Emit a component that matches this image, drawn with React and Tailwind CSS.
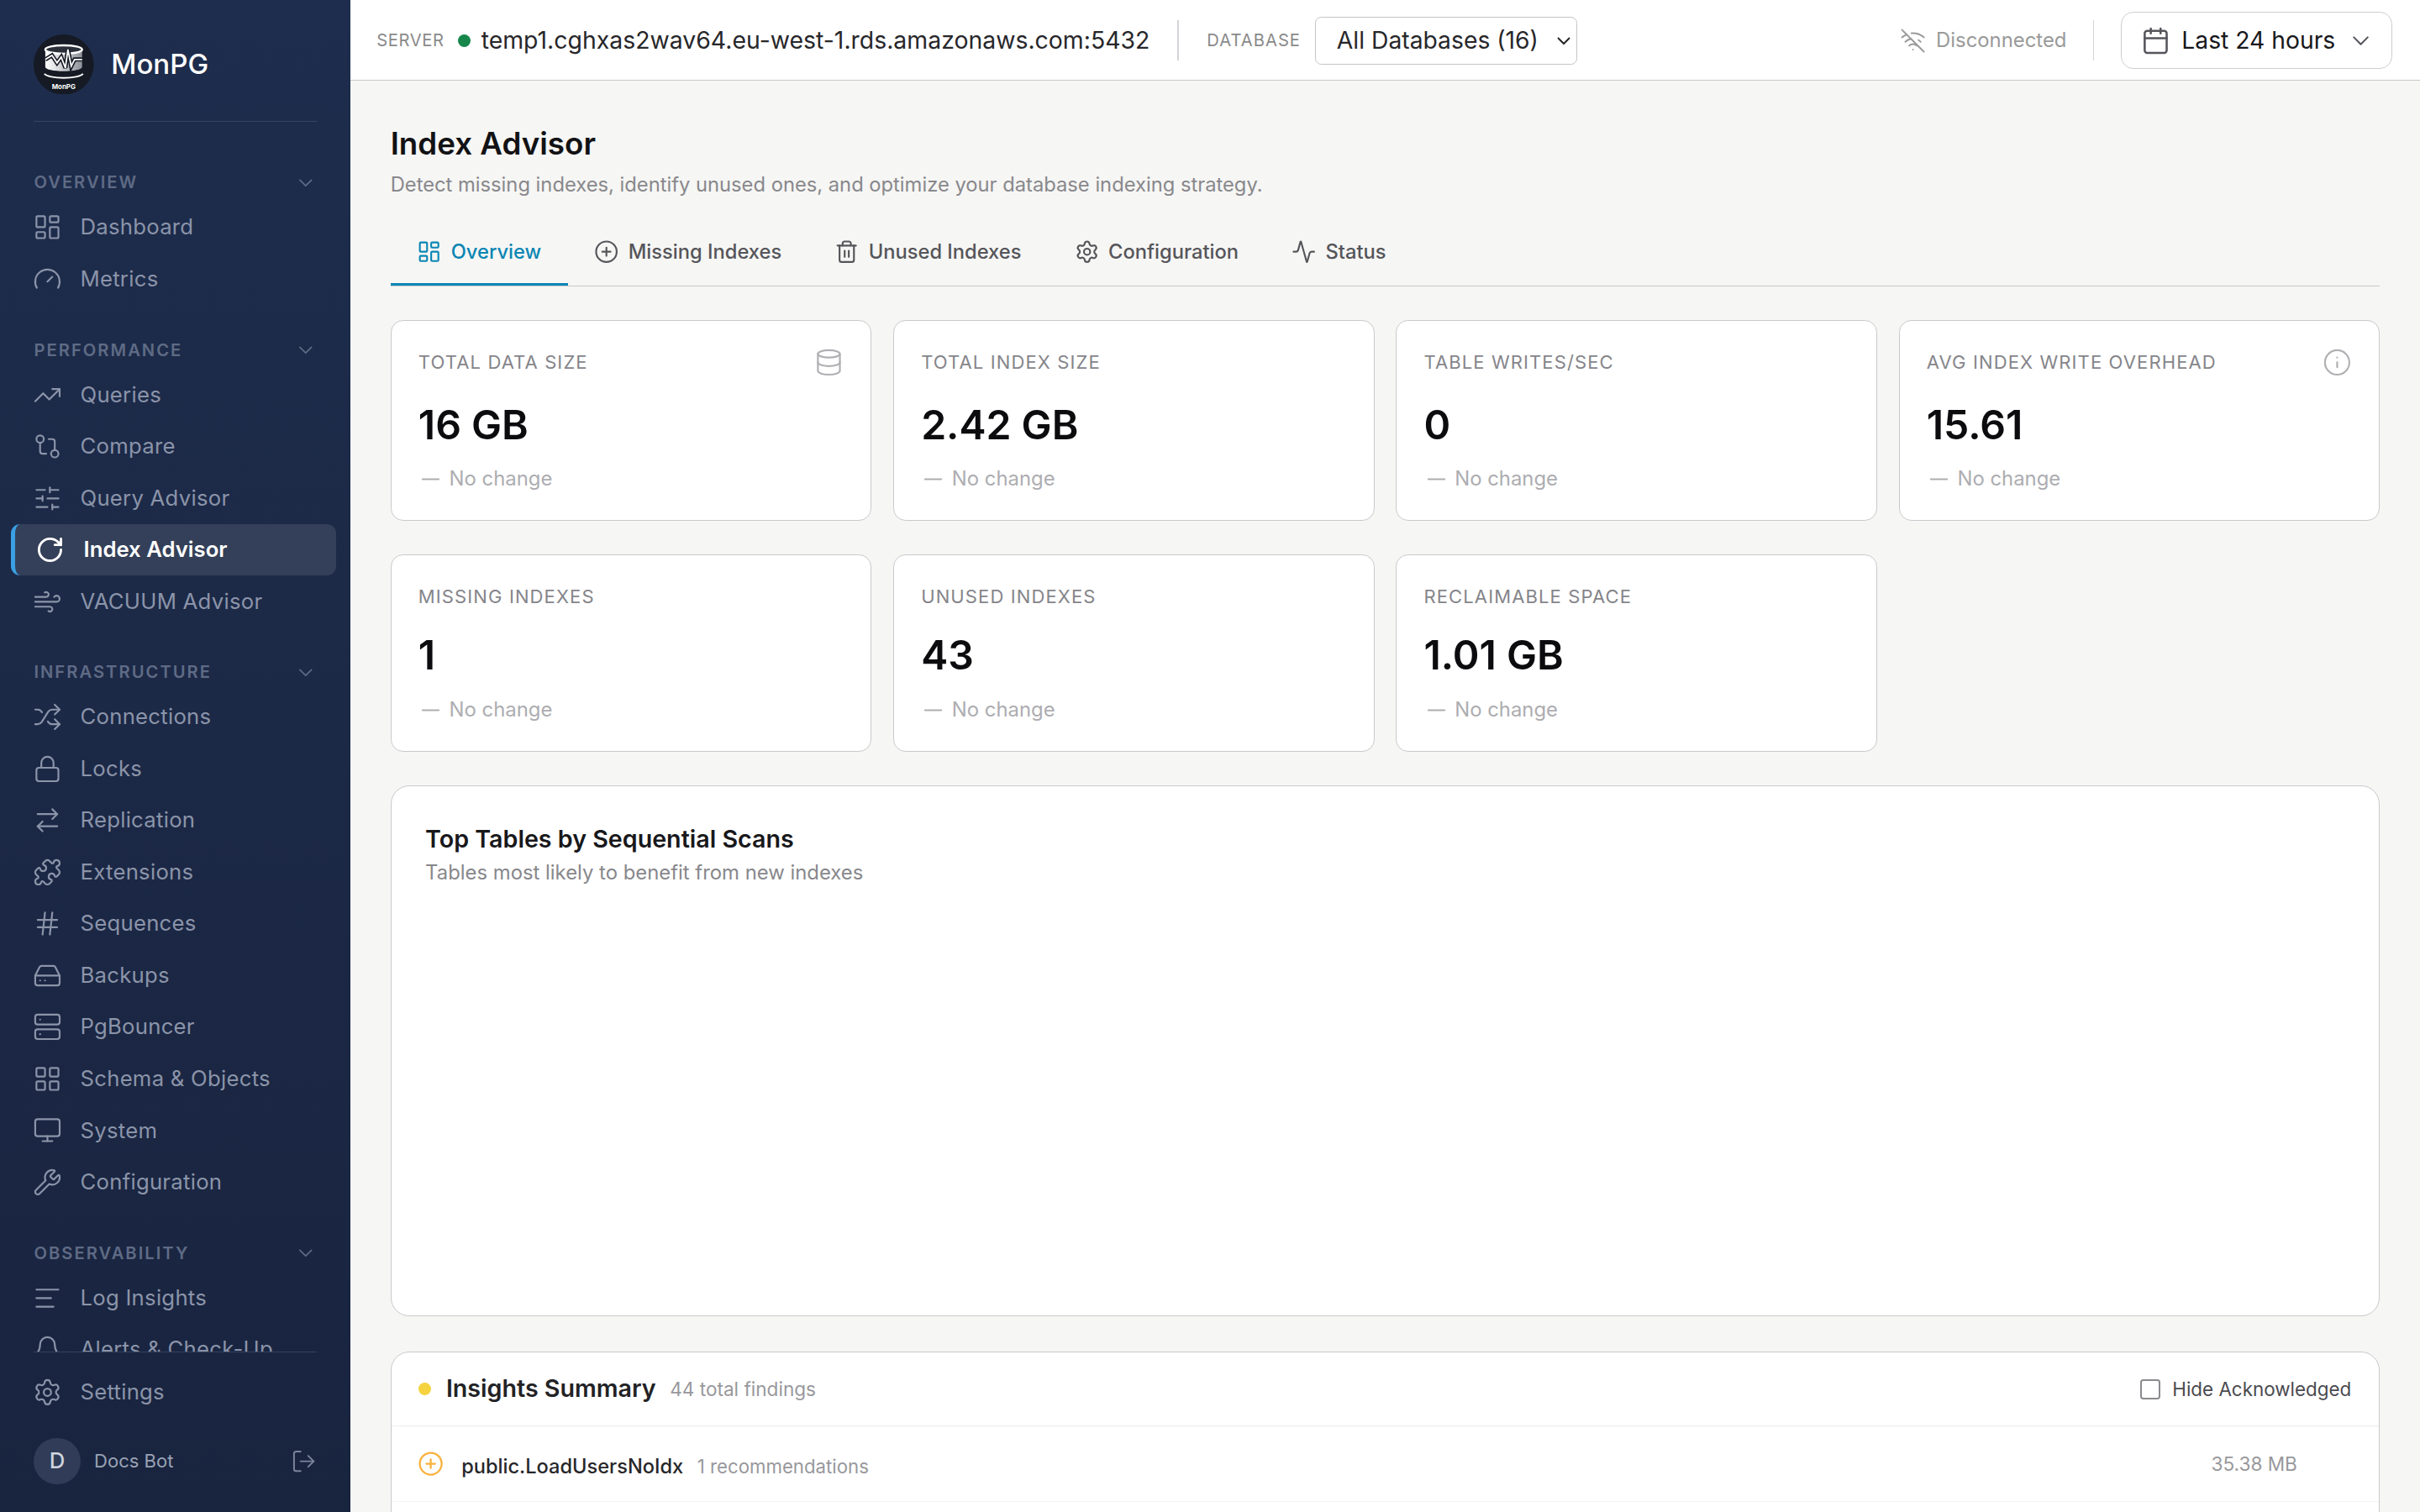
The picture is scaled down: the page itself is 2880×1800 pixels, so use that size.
import {
  Activity,
  AlignLeft,
  ArrowRightLeft,
  Bell,
  Calendar,
  ChevronDown,
  CirclePlus,
  Database,
  Gauge,
  GitCompare,
  Hash,
  HardDrive,
  Info,
  LayoutDashboard,
  LayoutGrid,
  Lock,
  LogOut,
  Minus,
  Monitor,
  Puzzle,
  RotateCw,
  Server,
  Settings,
  Shuffle,
  SlidersHorizontal,
  Trash2,
  TrendingUp,
  WifiOff,
  Wind,
  Wrench,
} from "lucide-react";

const navSections = [
  {
    title: "OVERVIEW",
    items: [
      { label: "Dashboard", icon: LayoutDashboard },
      { label: "Metrics", icon: Gauge },
    ],
  },
  {
    title: "PERFORMANCE",
    items: [
      { label: "Queries", icon: TrendingUp },
      { label: "Compare", icon: GitCompare },
      { label: "Query Advisor", icon: SlidersHorizontal },
      { label: "Index Advisor", icon: RotateCw, active: true },
      { label: "VACUUM Advisor", icon: Wind },
    ],
  },
  {
    title: "INFRASTRUCTURE",
    items: [
      { label: "Connections", icon: Shuffle },
      { label: "Locks", icon: Lock },
      { label: "Replication", icon: ArrowRightLeft },
      { label: "Extensions", icon: Puzzle },
      { label: "Sequences", icon: Hash },
      { label: "Backups", icon: HardDrive },
      { label: "PgBouncer", icon: Server },
      { label: "Schema & Objects", icon: LayoutGrid },
      { label: "System", icon: Monitor },
      { label: "Configuration", icon: Wrench },
    ],
  },
  {
    title: "OBSERVABILITY",
    items: [
      { label: "Log Insights", icon: AlignLeft },
      { label: "Alerts & Check-Up", icon: Bell },
    ],
  },
];

const tabs = [
  { label: "Overview", icon: LayoutDashboard, active: true },
  { label: "Missing Indexes", icon: CirclePlus },
  { label: "Unused Indexes", icon: Trash2 },
  { label: "Configuration", icon: Settings },
  { label: "Status", icon: Activity },
];

const stats = [
  { label: "Total Data Size", value: "16 GB", icon: Database, first: true },
  { label: "Total Index Size", value: "2.42 GB", first: true },
  { label: "Table Writes/Sec", value: "0", first: true },
  { label: "Avg Index Write Overhead", value: "15.61", icon: Info, first: true },
  { label: "Missing Indexes", value: "1" },
  { label: "Unused Indexes", value: "43" },
  { label: "Reclaimable Space", value: "1.01 GB" },
];

const Logo = () => (
  <svg viewBox="0 0 72 72" className="h-[39px] w-[39px] shrink-0">
    <defs>
      <linearGradient id="drum" x1="0" x2="1" y1="0" y2="0">
        <stop offset="0" stopColor="#ffffff" />
        <stop offset="1" stopColor="#8f939a" />
      </linearGradient>
    </defs>
    <circle cx="36" cy="36" r="36" fill="#151a24" />
    <path d="M14 18v21c0 3 10 5 22 5s22-2 22-5V18z" fill="url(#drum)" />
    <ellipse cx="36" cy="18" rx="22" ry="5" fill="#2a2f39" stroke="#ffffff" strokeWidth="2.5" />
    <path
      d="M14 30l8-5 6 9 5-7 5 13 3-22 4 20 4-8h9"
      fill="none"
      stroke="#151a24"
      strokeWidth="5"
    />
    <path
      d="M14 30l8-5 6 9 5-7 5 13 3-22 4 20 4-8h9"
      fill="none"
      stroke="#ffffff"
      strokeWidth="1.8"
    />
    <path d="M13 47c2 3 12 5 23 5s21-2 23-5" fill="none" stroke="#ffffff" strokeWidth="2" />
    <text
      x="36"
      y="65"
      textAnchor="middle"
      fill="#ffffff"
      fontSize="8"
      fontWeight="700"
      fontFamily="Inter, sans-serif"
    >
      MonPG
    </text>
  </svg>
);

const NavItem = ({ label, icon: Icon, active }) =>
  active ? (
    <div className="mr-[9px] ml-[7px] flex h-[33.5px] items-center gap-[12.5px] rounded-md border-l-[3px] border-[#3b9fe3] bg-[#344059] pl-[13px] text-sm font-semibold text-white">
      <Icon className="h-[19px] w-[19px] shrink-0" strokeWidth={2} />
      {label}
    </div>
  ) : (
    <div className="flex h-[33.5px] items-center gap-[12px] pl-[21px] text-sm tracking-[0.01em] whitespace-nowrap text-[#8b94a9]">
      <Icon className="h-[19px] w-[19px] shrink-0" strokeWidth={1.5} />
      {label}
    </div>
  );

const Sidebar = () => (
  <aside className="flex h-full w-[227px] shrink-0 flex-col bg-linear-to-b from-[#1e2d4d] to-[#19243f]">
    <div className="mx-[22px] flex h-[79px] items-center gap-[11px] border-b border-[#35435f] pt-[5px]">
      <Logo />
      <span className="text-lg font-medium text-white">MonPG</span>
    </div>
    <nav className="min-h-0 flex-1 overflow-hidden pt-[31.5px]">
      {navSections.map((section) => (
        <div key={section.title} className="mb-[21.3px]">
          <div className="mb-[4.2px] flex h-4 items-center justify-between pr-[21.5px] pl-[22px] text-[11px] font-semibold tracking-[0.1em] text-[#5f6b85]">
            {section.title}
            <ChevronDown className="h-[15px] w-[15px]" strokeWidth={1.5} />
          </div>
          {section.items.map((item) => (
            <NavItem key={item.label} {...item} />
          ))}
        </div>
      ))}
    </nav>
    <div className="mx-[22px] border-t border-[#35435f]" />
    <div className="pt-[9px]">
      <NavItem label="Settings" icon={Settings} />
    </div>
    <div className="flex h-[61px] items-start justify-between pt-[13px] pr-[21.5px] pl-[22px]">
      <div className="flex items-center gap-[9px]">
        <div className="flex h-[30px] w-[30px] items-center justify-center rounded-full bg-[#303c58] text-sm font-medium text-[#cfd4de]">
          D
        </div>
        <span className="text-xs text-[#9aa2b4]">Docs Bot</span>
      </div>
      <LogOut className="mt-[6.5px] h-[17px] w-[17px] text-[#7b849a]" strokeWidth={1.5} />
    </div>
  </aside>
);

const TopBar = () => (
  <header className="flex h-[52px] shrink-0 items-center border-b border-[#c9c9cd] bg-white pt-[1px] pr-[18px] pl-[17px]">
    <span className="text-[11px] tracking-[0.03em] text-[#8a8a8a]">SERVER</span>
    <span className="ml-[9px] h-2 w-2 rounded-full bg-[#16864a]" />
    <span className="ml-[7px] text-[15.47px] text-[#27272a]">
      temp1.cghxas2wav64.eu-west-1.rds.amazonaws.com:5432
    </span>
    <div className="ml-[18px] h-[26px] w-px bg-[#d4d4d8]" />
    <span className="ml-[18px] text-[11px] tracking-[0.05em] text-[#8a8a8a]">DATABASE</span>
    <select className="ml-[9px] h-[31px] w-[170px] rounded border border-[#c4c4c9] bg-white pl-[10px] text-[15.4px] text-[#27272a]">
      <option>All Databases (16)</option>
    </select>
    <div className="ml-auto flex items-center gap-[6.5px] text-[13px] text-[#9a9a9a]">
      <WifiOff className="h-[17px] w-[17px]" strokeWidth={1.5} />
      Disconnected
    </div>
    <div className="mx-[17px] h-[26px] w-px bg-[#d4d4d8]" />
    <button className="flex h-[37px] w-[176px] items-center rounded-lg border border-[#cdcdd1] bg-white pr-[11px] pl-[12.5px] text-[15.4px] text-[#18181b]">
      <Calendar className="h-[19px] w-[19px] text-[#55555c]" strokeWidth={1.75} />
      <span className="ml-[7.5px]">Last 24 hours</span>
      <ChevronDown className="ml-auto h-[18px] w-[18px] text-[#55555c]" strokeWidth={1.5} />
    </button>
  </header>
);

const StatCard = ({ label, value, icon: Icon, first }) => (
  <div className="rounded-lg border border-[#c9c9cd] bg-white px-[17.5px] pt-[19px] pb-[16.5px]">
    <div className="flex h-4 items-center justify-between">
      <span className="text-xs tracking-[0.05em] text-[#85858a] uppercase">{label}</span>
      {Icon && <Icon className="-my-1 h-[19px] w-[19px] text-[#b0b0b4]" strokeWidth={1.5} />}
    </div>
    <div className={`${first ? "mt-[16.5px]" : "mt-[14px]"} h-8 text-[26.2px] leading-8 font-semibold text-[#0c0c0f]`}>
      {value}
    </div>
    <div className="mt-[9px] -ml-px flex h-5 items-center gap-[3px] text-[13px] text-[#adadb1]">
      <Minus className="h-[18px] w-[18px]" strokeWidth={1.5} />
      No change
    </div>
  </div>
);

const App = () => (
  <div className="flex h-[980px] w-[1568px] overflow-hidden bg-[#f6f6f4] font-[Inter,sans-serif] [zoom:1.83673]">
    <Sidebar />
    <div className="flex min-w-0 flex-1 flex-col">
      <TopBar />
      <main className="min-h-0 flex-1 overflow-hidden px-[26px] pt-[27px]">
        <h1 className="text-xl leading-7 font-semibold text-[#121214]">Index Advisor</h1>
        <p className="mt-[3px] text-[12.93px] leading-5 text-[#88888c]">
          Detect missing indexes, identify unused ones, and optimize your database indexing strategy.
        </p>

        <div className="mt-[11px] flex border-b border-[#c9c9cd]">
          {tabs.map(({ label, icon: Icon, active }) => (
            <div
              key={label}
              className={
                active
                  ? "flex h-11 items-center gap-[6px] border-y-2 border-t-transparent border-b-[#0a86b4] px-[17.2px] text-[12.9px] font-medium text-[#0a86b4]"
                  : "flex h-11 items-center gap-[6px] border-y-2 border-transparent px-[17.2px] text-[12.9px] font-medium text-[#55555a]"
              }
            >
              <Icon className="h-4 w-4" strokeWidth={1.75} />
              {label}
            </div>
          ))}
        </div>

        <div className="mt-[22px] grid grid-cols-4 gap-x-[14px] gap-y-[22px]">
          {stats.map((stat) => (
            <StatCard key={stat.label} {...stat} />
          ))}
        </div>

        <section className="mt-[22px] h-[344px] rounded-xl border border-[#c9c9cd] bg-white px-[22px] pt-[22px]">
          <h2 className="text-[15.6px] leading-6 font-semibold text-[#18181b]">Top Tables by Sequential Scans</h2>
          <p className="text-[13px] leading-5 text-[#88888c]">Tables most likely to benefit from new indexes</p>
        </section>

        <section className="mt-[23px] rounded-xl border border-[#c9c9cd] bg-white">
          <div className="flex h-[48px] items-center border-b border-[#ececee] pr-[18px] pl-[17.5px]">
            <span className="h-2 w-2 rounded-full bg-[#f5d33f]" />
            <span className="ml-[10px] text-[15.6px] font-semibold text-[#222225]">Insights Summary</span>
            <span className="ml-[9px] text-[12.3px] text-[#98989c]">44 total findings</span>
            <label className="ml-auto flex items-center gap-2 text-[12.2px] text-[#4a4a4f]">
              <span className="h-[13px] w-[13px] rounded-[2px] border-[1.5px] border-[#8a8a8e]" />
              Hide Acknowledged
            </label>
          </div>
          <div className="flex h-[49px] items-center border-b border-[#f4f4f5] pr-[53px] pl-[17px]">
            <CirclePlus className="h-[17px] w-[17px] text-[#f9b13c]" strokeWidth={1.75} />
            <span className="mt-[3px] ml-[11.5px] text-[12.85px] font-medium text-[#27272a]">public.LoadUsersNoIdx</span>
            <span className="mt-[3px] ml-[9px] text-[12.1px] text-[#98989c]">1 recommendations</span>
            <span className="ml-auto text-[12.3px] text-[#98989c]">35.38 MB</span>
          </div>
          <div className="h-20" />
        </section>
      </main>
    </div>
  </div>
);

export default App;
